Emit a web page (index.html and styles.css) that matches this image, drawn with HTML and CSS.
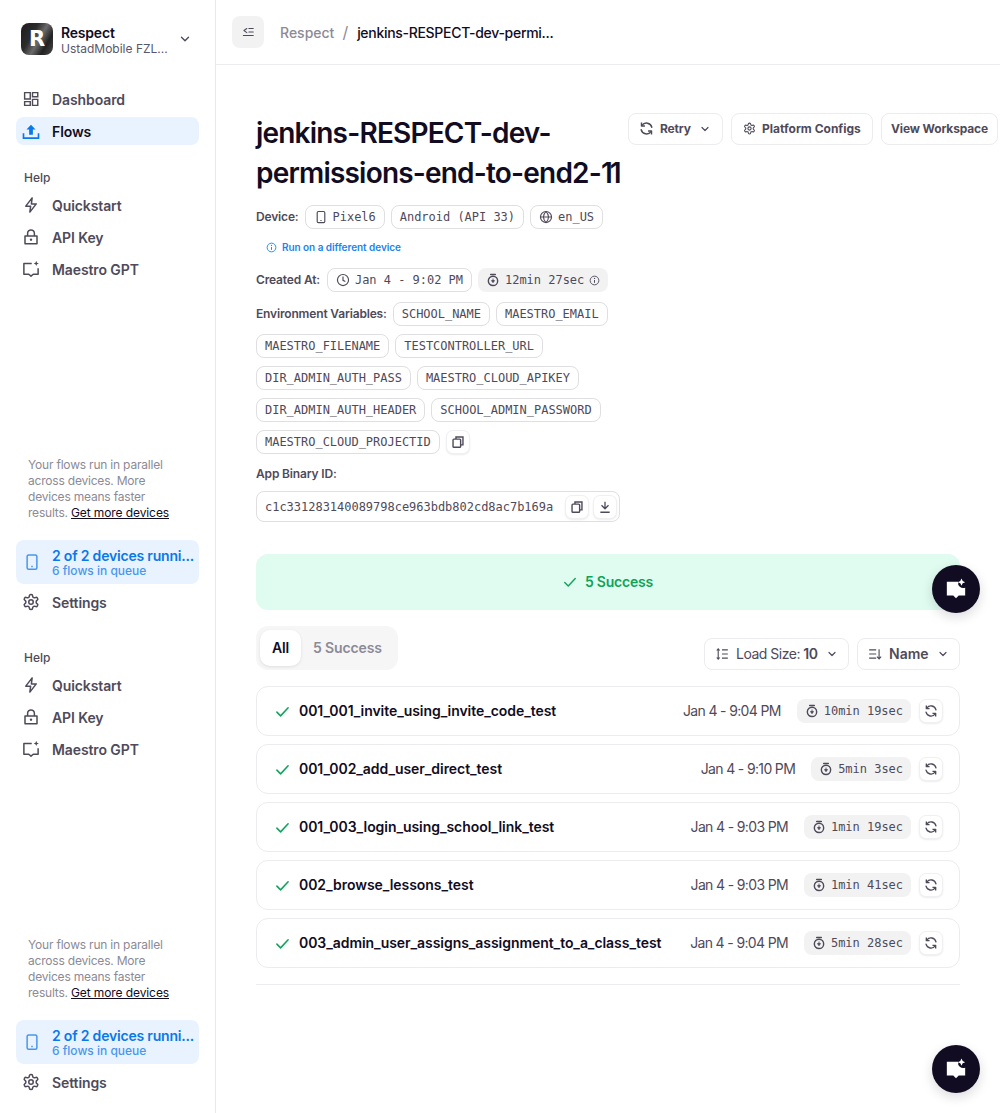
FILE: index.html
```html
<!DOCTYPE html>
<html lang="en">
<head>
<meta charset="utf-8">
<title>jenkins-RESPECT-dev-permissions-end-to-end2-11</title>
<link rel="stylesheet" href="styles.css">
</head>
<body>
<svg class="defs" width="0" height="0" aria-hidden="true">
  <symbol id="i-bolt" viewBox="0 0 24 24"><path d="M13.5 2.5 5 13.5h6.5l-1 8 8.5-11h-6.5l1-8Z" fill="none" stroke="currentColor" stroke-width="2" stroke-linejoin="round"/></symbol>
  <symbol id="i-lock" viewBox="0 0 24 24"><path d="M7.5 10.5V7a4.5 4.5 0 0 1 9 0v3.5M4 10.500h16v10.500H4z" fill="none" stroke="currentColor" stroke-width="2" stroke-linejoin="round"/><circle cx="12" cy="15.500" r="1.600" fill="currentColor"/></symbol>
  <symbol id="i-gpt" viewBox="0 0 24 24"><path d="M13 4.500H2.500v14.500H9l3 2.500 3-2.500h6.500v-8" fill="none" stroke="currentColor" stroke-width="2" stroke-linejoin="round"/><path d="M19 1l1 2.500 2.500 1-2.500 1L19 8l-1-2.500-2.500-1 2.500-1z" fill="currentColor"/></symbol>
  <symbol id="i-gear" viewBox="0 0 24 24"><path d="M12.220 2h-.44a2 2 0 0 0-2 2v.18a2 2 0 0 1-1 1.730l-.43.25a2 2 0 0 1-2 0l-.15-.08a2 2 0 0 0-2.730.73l-.22.38a2 2 0 0 0 .73 2.730l.15.1a2 2 0 0 1 1 1.720v.51a2 2 0 0 1-1 1.740l-.15.09a2 2 0 0 0-.73 2.730l.22.38a2 2 0 0 0 2.730.73l.15-.08a2 2 0 0 1 2 0l.43.25a2 2 0 0 1 1 1.730V20a2 2 0 0 0 2 2h.44a2 2 0 0 0 2-2v-.18a2 2 0 0 1 1-1.730l.43-.25a2 2 0 0 1 2 0l.15.08a2 2 0 0 0 2.730-.73l.22-.39a2 2 0 0 0-.73-2.730l-.15-.08a2 2 0 0 1-1-1.740v-.5a2 2 0 0 1 1-1.740l.15-.09a2 2 0 0 0 .73-2.730l-.22-.38a2 2 0 0 0-2.730-.73l-.15.08a2 2 0 0 1-2 0l-.43-.25a2 2 0 0 1-1-1.730V4a2 2 0 0 0-2-2z" fill="none" stroke="currentColor" stroke-width="2" stroke-linejoin="round"/><circle cx="12" cy="12" r="3" fill="none" stroke="currentColor" stroke-width="2"/></symbol>
  <symbol id="i-phone" viewBox="0 0 24 24"><rect x="5.500" y="2.500" width="13" height="19" rx="2" fill="none" stroke="currentColor" stroke-width="2"/><path d="M11 18h2" stroke="currentColor" stroke-width="2"/></symbol>
  <symbol id="i-chev" viewBox="0 0 24 24"><path d="m6 9 6 6 6-6" fill="none" stroke="currentColor" stroke-width="2.400" stroke-linecap="round" stroke-linejoin="round"/></symbol>
  <symbol id="i-retry" viewBox="0 0 24 24"><path d="M20.500 10A8.800 8.800 0 0 0 4.800 7M3.500 14a8.800 8.800 0 0 0 15.700 3" fill="none" stroke="currentColor" stroke-width="2.300" stroke-linecap="round"/><path d="M4 2.500V8h5.500M20 21.500V16h-5.500" fill="none" stroke="currentColor" stroke-width="2.300" stroke-linejoin="round"/></symbol>
  <symbol id="i-copy" viewBox="0 0 24 24"><path d="M8.500 7V3.500h12v13.500H16.500" fill="none" stroke="currentColor" stroke-width="2.400"/><rect x="3.500" y="7" width="13" height="14" rx="1.500" fill="none" stroke="currentColor" stroke-width="2.400"/></symbol>
  <symbol id="i-timer" viewBox="0 0 24 24"><path d="M8 2.500h8" stroke="currentColor" stroke-width="2.400" stroke-linecap="round"/><circle cx="12" cy="13.500" r="8" fill="none" stroke="currentColor" stroke-width="2.400"/><path d="M12 9.500v4.500m-2.500-1L12 16.500l2.500-3.500z" fill="currentColor" stroke="currentColor" stroke-width="1.500"/></symbol>
  <symbol id="i-check" viewBox="0 0 24 24"><path d="m3 13 6 6L21 6" fill="none" stroke="currentColor" stroke-width="2.400" stroke-linecap="round" stroke-linejoin="round"/></symbol>
  <symbol id="i-chat" viewBox="0 0 24 24"><path d="M2 4h12.500a5.500 5.500 0 0 0 7.500 6.500V19h-7l-3 3-3-3H2z" fill="currentColor"/><path d="M18 .5l1.300 2.700L22 4.500l-2.700 1.300L18 8.500l-1.300-2.700L14 4.500l2.700-1.300z" fill="currentColor"/></symbol>
  <symbol id="i-info" viewBox="0 0 24 24"><circle cx="12" cy="12" r="9.500" fill="none" stroke="currentColor" stroke-width="2"/><path d="M12 11v6" stroke="currentColor" stroke-width="2.200"/><circle cx="12" cy="7.500" r="1.400" fill="currentColor"/></symbol>
</svg>

<div class="app">
  <aside class="sidebar">
    <div class="org">
      <div class="logo">R</div>
      <div class="org-text">
        <div class="org-name">Respect</div>
        <div class="org-sub">UstadMobile FZL...</div>
      </div>
      <svg class="org-chev"><use href="#i-chev"/></svg>
    </div>
    <nav class="nav-top">
      <a class="nav-item">
        <svg class="nav-icon" viewBox="0 0 24 24"><path d="M3.500 3.500h7.500v8.500H3.500zM14 3.500h7v5.500h-7zM14 12.500h7v8h-7zM3.500 15.500H11v5H3.500z" fill="none" stroke="currentColor" stroke-width="1.900"/></svg>
        Dashboard
      </a>
      <a class="nav-item active">
        <svg class="nav-icon" viewBox="0 0 24 24"><path d="M2 15v6.500h20V15" fill="none" stroke="currentColor" stroke-width="2.200"/><path d="M12 3.500 18 10h-3.500v7h-5v-7H6z" fill="currentColor"/></svg>
        Flows
      </a>
    </nav>

    <section class="side-section">
      <div class="help-label">Help</div>
      <a class="nav-item"><svg class="nav-icon"><use href="#i-bolt"/></svg>Quickstart</a>
      <a class="nav-item"><svg class="nav-icon"><use href="#i-lock"/></svg>API Key</a>
      <a class="nav-item"><svg class="nav-icon"><use href="#i-gpt"/></svg>Maestro GPT</a>
      <p class="promo">Your flows run in parallel across devices. More devices means faster results. <a class="promo-link">Get more devices</a></p>
      <div class="device-card">
        <svg class="device-icon"><use href="#i-phone"/></svg>
        <div class="device-text">
          <div class="device-title">2 of 2 devices runni...</div>
          <div class="device-sub">6 flows in queue</div>
        </div>
      </div>
      <a class="nav-item"><svg class="nav-icon"><use href="#i-gear"/></svg>Settings</a>
    </section>

    <section class="side-section">
      <div class="help-label">Help</div>
      <a class="nav-item"><svg class="nav-icon"><use href="#i-bolt"/></svg>Quickstart</a>
      <a class="nav-item"><svg class="nav-icon"><use href="#i-lock"/></svg>API Key</a>
      <a class="nav-item"><svg class="nav-icon"><use href="#i-gpt"/></svg>Maestro GPT</a>
      <p class="promo">Your flows run in parallel across devices. More devices means faster results. <a class="promo-link">Get more devices</a></p>
      <div class="device-card">
        <svg class="device-icon"><use href="#i-phone"/></svg>
        <div class="device-text">
          <div class="device-title">2 of 2 devices runni...</div>
          <div class="device-sub">6 flows in queue</div>
        </div>
      </div>
      <a class="nav-item"><svg class="nav-icon"><use href="#i-gear"/></svg>Settings</a>
    </section>
  </aside>

  <div class="main">
    <header class="topbar">
      <button class="toggle">
        <svg class="toggle-icon" viewBox="0 0 24 24"><path d="M10 6 5 9.500l5 3.500M13.500 6H21M13.500 12H21M4 18h17" fill="none" stroke="currentColor" stroke-width="1.800" stroke-linecap="round" stroke-linejoin="round"/></svg>
      </button>
      <div class="crumbs">
        <span class="crumb-muted">Respect</span>
        <span class="crumb-sep">/</span>
        <span class="crumb-current">jenkins-RESPECT-dev-permi...</span>
      </div>
    </header>

    <main class="content">
      <div class="title-row">
        <h1 class="title">jenkins-RESPECT-dev-permissions-end-to-end2-<span class="title-tail">11</span></h1>
        <div class="actions">
          <button class="btn btn-retry"><svg class="btn-icon"><use href="#i-retry"/></svg>Retry<svg class="btn-chev"><use href="#i-chev"/></svg></button>
          <button class="btn btn-config"><svg class="btn-icon-sm"><use href="#i-gear"/></svg>Platform Configs</button>
          <button class="btn btn-view">View Workspace</button>
        </div>
      </div>

      <div class="meta-row device-row">
        <span class="meta-label">Device:</span>
        <span class="chip"><svg class="chip-icon"><use href="#i-phone"/></svg>Pixel6</span>
        <span class="chip">Android (API 33)</span>
        <span class="chip"><svg class="chip-icon" viewBox="0 0 24 24"><circle cx="12" cy="12" r="9.500" fill="none" stroke="currentColor" stroke-width="2"/><path d="M2.500 12h19M12 2.500c-5.500 6-5.500 13 0 19M12 2.500c5.500 6 5.500 13 0 19" fill="none" stroke="currentColor" stroke-width="1.800"/></svg>en_US</span>
      </div>
      <a class="run-link"><svg class="run-icon"><use href="#i-info"/></svg>Run on a different device</a>
      <div class="meta-row created-row">
        <span class="meta-label">Created At:</span>
        <span class="chip"><svg class="chip-icon" viewBox="0 0 24 24"><circle cx="12" cy="12" r="9.500" fill="none" stroke="currentColor" stroke-width="2"/><path d="M12 6v6.500l4 2" fill="none" stroke="currentColor" stroke-width="2"/></svg>Jan 4 - 9:02 PM</span>
        <span class="duration duration-total"><svg class="chip-icon"><use href="#i-timer"/></svg>12min 27sec<svg class="duration-info"><use href="#i-info"/></svg></span>
      </div>
      <div class="env">
        <span class="meta-label">Environment Variables:</span>
        <span class="chip">SCHOOL_NAME</span>
        <span class="chip">MAESTRO_EMAIL</span>
        <span class="chip">MAESTRO_FILENAME</span>
        <span class="chip">TESTCONTROLLER_URL</span>
        <span class="chip">DIR_ADMIN_AUTH_PASS</span>
        <span class="chip">MAESTRO_CLOUD_APIKEY</span>
        <span class="chip">DIR_ADMIN_AUTH_HEADER</span>
        <span class="chip">SCHOOL_ADMIN_PASSWORD</span>
        <span class="chip">MAESTRO_CLOUD_PROJECTID</span>
        <button class="icon-btn"><svg class="icon-btn-svg"><use href="#i-copy"/></svg></button>
      </div>
      <div class="meta-label binary-label">App Binary ID:</div>
      <div class="binary">
        <span class="binary-id">c1c331283140089798ce963bdb802cd8ac7b169a</span>
        <button class="icon-btn"><svg class="icon-btn-svg"><use href="#i-copy"/></svg></button>
        <button class="icon-btn"><svg class="icon-btn-svg" viewBox="0 0 24 24"><path d="M12 3v12m-6-6 6 6 6-6M4 21h16" fill="none" stroke="currentColor" stroke-width="2.200"/></svg></button>
      </div>

      <div class="banner"><svg class="banner-check"><use href="#i-check"/></svg>5 Success</div>

      <div class="controls">
        <div class="tabs">
          <span class="tab tab-active">All</span>
          <span class="tab">5 Success</span>
        </div>
        <div class="selects">
          <button class="select select-load">
            <svg class="select-icon" viewBox="0 0 24 24"><path d="M12 5h10M12 12h10M12 19h10" fill="none" stroke="currentColor" stroke-width="1.900"/><path d="M5.500 3v18M3 6l2.500-3L8 6M3 18l2.500 3L8 18" fill="none" stroke="currentColor" stroke-width="1.900"/></svg>
            <span class="select-text">Load Size: <b class="select-strong">10</b></span>
            <svg class="select-chev"><use href="#i-chev"/></svg>
          </button>
          <button class="select select-name">
            <svg class="select-icon" viewBox="0 0 24 24"><path d="M2 5h12M2 12h12M2 19h12" fill="none" stroke="currentColor" stroke-width="1.900"/><path d="M19 4v16m-3.500-3.500L19 20.500l3.500-4" fill="none" stroke="currentColor" stroke-width="1.900"/></svg>
            <b class="select-strong">Name</b>
            <svg class="select-chev"><use href="#i-chev"/></svg>
          </button>
        </div>
      </div>

      <ul class="flows">
        <li class="flow"><svg class="flow-check"><use href="#i-check"/></svg><span class="flow-name">001_001_invite_using_invite_code_test</span><span class="flow-date">Jan 4 - 9:04 PM</span><span class="duration"><svg class="chip-icon"><use href="#i-timer"/></svg>10min 19sec</span><button class="icon-btn"><svg class="icon-btn-svg"><use href="#i-retry"/></svg></button></li>
        <li class="flow"><svg class="flow-check"><use href="#i-check"/></svg><span class="flow-name">001_002_add_user_direct_test</span><span class="flow-date">Jan 4 - 9:10 PM</span><span class="duration"><svg class="chip-icon"><use href="#i-timer"/></svg>5min 3sec</span><button class="icon-btn"><svg class="icon-btn-svg"><use href="#i-retry"/></svg></button></li>
        <li class="flow"><svg class="flow-check"><use href="#i-check"/></svg><span class="flow-name">001_003_login_using_school_link_test</span><span class="flow-date">Jan 4 - 9:03 PM</span><span class="duration"><svg class="chip-icon"><use href="#i-timer"/></svg>1min 19sec</span><button class="icon-btn"><svg class="icon-btn-svg"><use href="#i-retry"/></svg></button></li>
        <li class="flow"><svg class="flow-check"><use href="#i-check"/></svg><span class="flow-name">002_browse_lessons_test</span><span class="flow-date">Jan 4 - 9:03 PM</span><span class="duration"><svg class="chip-icon"><use href="#i-timer"/></svg>1min 41sec</span><button class="icon-btn"><svg class="icon-btn-svg"><use href="#i-retry"/></svg></button></li>
        <li class="flow"><svg class="flow-check"><use href="#i-check"/></svg><span class="flow-name">003_admin_user_assigns_assignment_to_a_class_test</span><span class="flow-date">Jan 4 - 9:04 PM</span><span class="duration"><svg class="chip-icon"><use href="#i-timer"/></svg>5min 28sec</span><button class="icon-btn"><svg class="icon-btn-svg"><use href="#i-retry"/></svg></button></li>
      </ul>
      <div class="end-rule"></div>
    </main>
  </div>

  <button class="fab fab-upper"><svg class="fab-icon"><use href="#i-chat"/></svg></button>
  <button class="fab fab-lower"><svg class="fab-icon"><use href="#i-chat"/></svg></button>
</div>
</body>
</html>
```

FILE: styles.css
```css
* { box-sizing: border-box; }
html, body { margin: 0; padding: 0; height: 100%; overflow: hidden; background: #fff; }
body { font-family: Inter, "Noto Sans", sans-serif; color: #110c22; }
button { font-family: inherit; cursor: pointer; }
.defs { position: absolute; }

.app { position: relative; display: flex; width: 1000px; height: 1113px; overflow: hidden; }

/* Sidebar */
.sidebar { flex: 0 0 216px; border-right: 1px solid #e9e9eb; padding: 23px 16px 0; display: flex; flex-direction: column; }
.org { display: flex; align-items: center; height: 32px; padding-left: 5px; }
.logo { width: 32px; height: 32px; border-radius: 8px; background: linear-gradient(120deg, #1d1d1d 0%, #2c2c2c 35%, #6a6a6a 55%, #222 75%, #4a4a4a 100%); color: #fff; font: 700 21px/32px "DejaVu Sans", sans-serif; text-align: center; flex: none; }
.org-text { margin-left: 8px; padding-top: 2px; flex: 1; min-width: 0; }
.org-name { font-size: 14px; line-height: 17px; font-weight: 600; letter-spacing: -0.2px; }
.org-sub { font-size: 12px; line-height: 15px; font-weight: 400; color: #5a5668; white-space: nowrap; }
.org-chev { width: 14px; height: 14px; color: #4f4a5a; margin-right: 7px; flex: none; }

.nav-top { margin-top: 30px; display: flex; flex-direction: column; gap: 4px; }
.nav-item { display: flex; align-items: center; height: 28px; padding: 0 8px 0 6px; border-radius: 8px; font-size: 14px; font-weight: 600; color: #4f4a5a; letter-spacing: -0.1px; gap: 12px; }
.nav-item.active { background: #e8f3ff; color: #110c22; }
.nav-item.active .nav-icon { color: #0a78e8; }
.nav-icon { width: 18px; height: 18px; flex: none; }

.side-section { height: 480px; padding-bottom: 34px; display: flex; flex-direction: column; gap: 4px; flex: none; }
.nav-top + .side-section { margin-top: 25px; }
.help-label { font-size: 12px; line-height: 16px; font-weight: 500; color: #4f4a5a; padding-left: 8px; margin-bottom: 1px; }
.promo { margin: auto 0 0; padding: 0 21px 0 12px; font-size: 12px; line-height: 16px; color: #8c8a96; letter-spacing: -0.2px; }
.promo-link { color: #110c22; text-decoration: underline; white-space: nowrap; letter-spacing: -0.1px; }
.device-card { display: flex; align-items: center; height: 44px; margin-top: 15px; border-radius: 8px; background: #e8f3ff; padding-left: 7px; gap: 11px; }
.device-icon { width: 18px; height: 18px; color: #4a96ec; flex: none; }
.device-text { min-width: 0; }
.device-title { font-size: 14px; line-height: 17px; font-weight: 600; color: #0a78e8; white-space: nowrap; letter-spacing: -0.2px; }
.device-sub { font-size: 12px; line-height: 14px; font-weight: 500; color: #4a96ec; }

/* Top bar */
.main { flex: 1; min-width: 0; }
.topbar { display: flex; align-items: center; height: 65px; border-bottom: 1px solid #ececee; padding-left: 16px; }
.toggle { width: 32px; height: 32px; border: 0; border-radius: 8px; background: #f2f2f3; display: flex; align-items: center; justify-content: center; padding: 0; color: #4f4a5a; }
.toggle-icon { width: 14px; height: 14px; }
.crumbs { margin-left: 16px; display: flex; align-items: center; font-size: 14px; }
.crumb-muted { color: #8c8a96; font-weight: 500; }
.crumb-sep { color: #8c8a96; margin: 0 9px 0 8px; font-size: 16px; }
.crumb-current { color: #110c22; font-weight: 500; letter-spacing: -0.3px; }

/* Content */
.content { padding: 48px 40px 0; width: 784px; }
.title-row { display: flex; align-items: flex-start; }
.title { flex: 0 0 372px; margin: 0; font-size: 28px; line-height: 40px; font-weight: 600; letter-spacing: -0.8px; }
.title-tail { letter-spacing: -3px; }
.actions { display: flex; gap: 8px; flex: none; }
.btn { height: 32px; display: flex; align-items: center; border: 1px solid #ececee; background: #fff; border-radius: 8px; font-size: 12px; font-weight: 700; color: #4f4a5a; padding: 0 0 1px; white-space: nowrap; letter-spacing: -0.15px; }
.btn-retry { width: 95px; padding-left: 10px; }
.btn-config { width: 142px; padding-left: 11px; letter-spacing: 0; }
.btn-view { width: 117px; justify-content: center; }
.btn-icon { width: 15px; height: 15px; margin-right: 6px; }
.btn-icon-sm { width: 13px; height: 13px; margin-right: 6px; }
.btn-chev { width: 12px; height: 12px; margin-left: 8px; }

.meta-row { display: flex; align-items: center; gap: 6px; }
.device-row { margin-top: 12px; }
.created-row { margin-top: 12px; }
.created-row .meta-label { margin-right: 1px; }
.meta-label { font-size: 12px; line-height: 16px; font-weight: 600; color: #4f4a5a; letter-spacing: -0.16px; }
.chip { display: inline-flex; align-items: center; height: 24px; padding: 0 8px; border: 1px solid #dfdfe2; border-radius: 8px; font-family: "DejaVu Sans Mono", monospace; font-size: 12px; color: #4f4a5a; white-space: nowrap; letter-spacing: -0.02px; }
.chip-icon { width: 14px; height: 14px; margin-right: 5px; flex: none; }
.run-link { display: flex; align-items: center; height: 16px; margin: 10px 0 0 10px; font-size: 10px; font-weight: 600; color: #1b84f0; letter-spacing: -0.05px; }
.run-icon { width: 11px; height: 11px; margin-right: 5px; }
.duration { display: inline-flex; align-items: center; height: 24px; padding: 0 8px; border-radius: 8px; background: #f2f2f3; font-family: "DejaVu Sans Mono", monospace; font-size: 12px; color: #4f4a5a; white-space: nowrap; letter-spacing: -0.02px; }
.duration-total { margin-top: 1px; }
.duration-info { width: 11px; height: 11px; margin-left: 5px; }

.env { display: flex; flex-wrap: wrap; align-items: center; gap: 8px 6px; margin-top: 10px; width: 360px; }
.icon-btn { width: 24px; height: 24px; flex: none; padding: 0; display: inline-flex; align-items: center; justify-content: center; background: #fff; border: 1px solid #f0f0f2; border-radius: 7px; color: #4f4a5a; box-shadow: 0 1px 2px rgba(17, 12, 34, 0.08); }
.icon-btn-svg { width: 14px; height: 14px; }

.binary-label { margin-top: 12px; }
.binary { display: flex; align-items: center; gap: 4px; width: 364px; height: 31px; margin-top: 9px; padding: 0 2px 0 8px; border: 1px solid #dfdfe2; border-radius: 8px; }
.binary-id { flex: 1; font-family: "DejaVu Sans Mono", monospace; font-size: 12px; color: #4f4a5a; letter-spacing: -0.02px; }

.banner { display: flex; align-items: center; justify-content: center; height: 56px; margin-top: 32px; padding-bottom: 1px; background: #e0fbef; border-radius: 12px; font-size: 14px; font-weight: 600; color: #0fa35a; letter-spacing: -0.2px; }
.banner-check { width: 14px; height: 14px; margin-right: 8px; }

.controls { display: flex; justify-content: space-between; align-items: flex-end; margin-top: 16px; }
.tabs { display: flex; align-items: center; height: 44px; padding: 4px; border-radius: 12px; background: #f6f6f7; }
.tab { display: flex; align-items: center; height: 36px; padding: 0 12px 1px; font-size: 14px; font-weight: 600; color: #8c8a96; letter-spacing: -0.15px; }
.tab-active { background: #fff; color: #110c22; border-radius: 10px; box-shadow: 0 1px 3px rgba(17, 12, 34, 0.1); }
.selects { display: flex; gap: 8px; }
.select { display: flex; align-items: center; height: 32px; background: #fff; border: 1px solid #ececee; border-radius: 8px; font-size: 14px; font-weight: 400; color: #4f4a5a; padding: 0 0 1px 10px; white-space: nowrap; }
.select-load { width: 145px; }
.select-name { width: 103px; }
.select-text { letter-spacing: -0.5px; }
.select-strong { font-weight: 600; }
.select-icon { width: 14px; height: 14px; margin-right: 7px; }
.select-chev { width: 12px; height: 12px; margin-left: 8px; }

.flows { list-style: none; margin: 16px 0 0; padding: 0; display: flex; flex-direction: column; gap: 8px; }
.flow { display: flex; align-items: center; height: 50px; padding: 0 16px 0 18px; border: 1px solid #ececee; border-radius: 12px; }
.flow-check { width: 15px; height: 15px; color: #0fa35a; margin-right: 9px; flex: none; }
.flow-name { flex: 1; padding-bottom: 1px; font-size: 14px; font-weight: 600; color: #110c22; letter-spacing: -0.05px; white-space: nowrap; }
.flow-date { padding-bottom: 1px; font-size: 14px; color: #4f4a5a; margin-right: 16px; white-space: nowrap; letter-spacing: -0.65px; }
.flow .icon-btn { margin-left: 8px; }
.end-rule { height: 1px; background: #ececee; margin-top: 16px; }

.fab { position: absolute; right: 20px; width: 48px; height: 48px; border: 0; border-radius: 50%; background: #110c22; color: #fff; display: flex; align-items: center; justify-content: center; padding: 0; box-shadow: 0 4px 12px rgba(17, 12, 34, 0.15); }
.fab-upper { bottom: 500px; }
.fab-lower { bottom: 20px; }
.fab-icon { width: 22px; height: 22px; }
```
